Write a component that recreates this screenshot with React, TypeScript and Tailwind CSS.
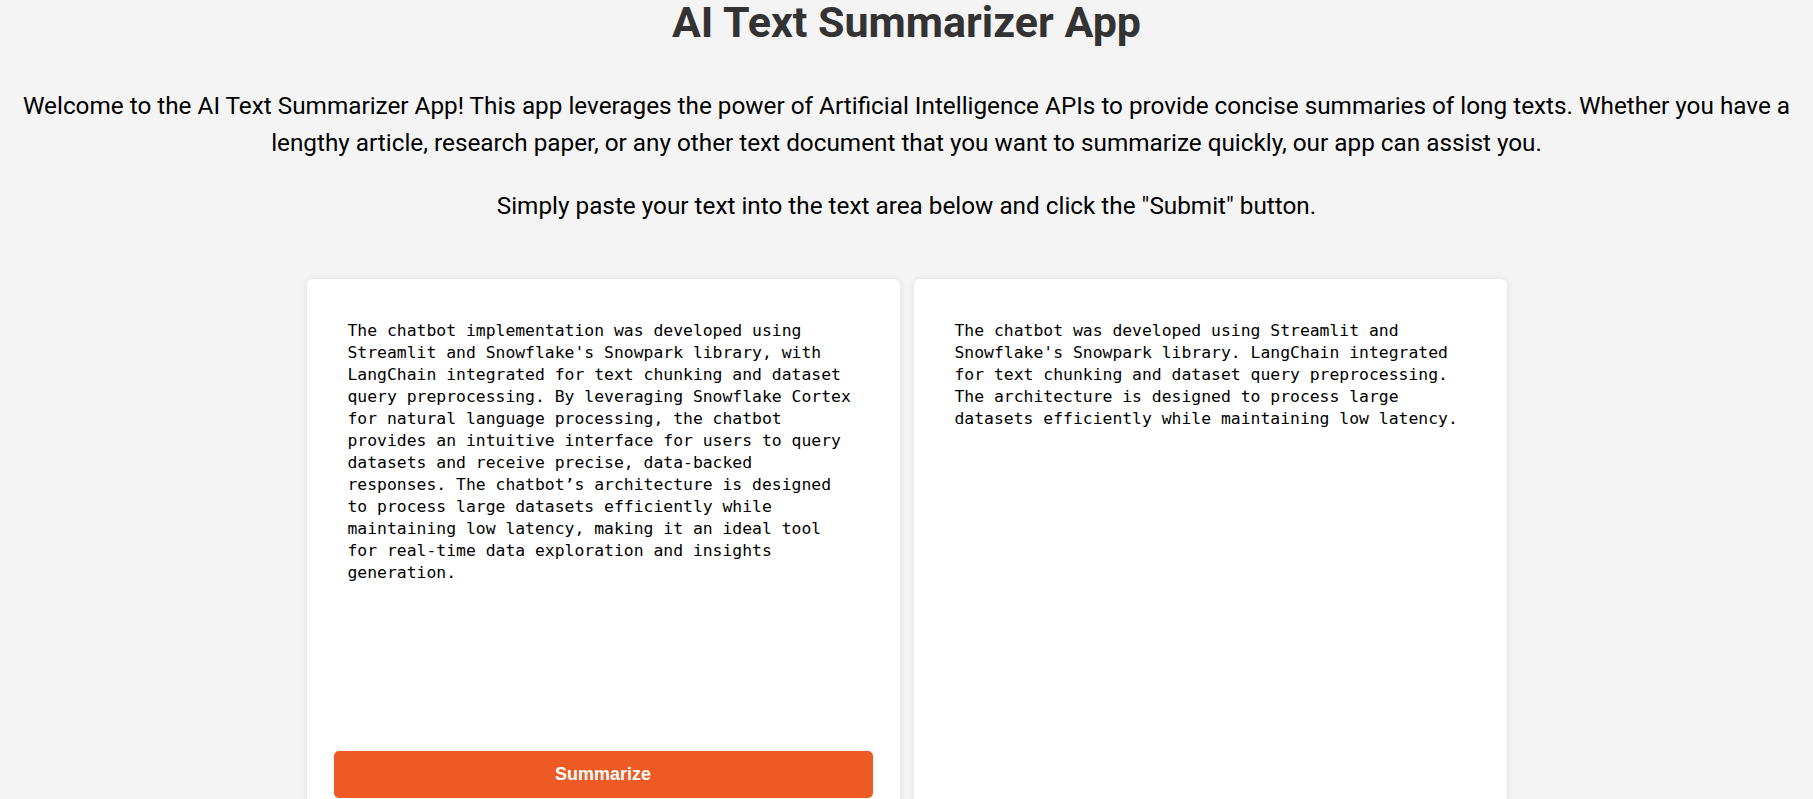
export default function App() {
  const left = [
    "The chatbot implementation was developed using",
    "Streamlit and Snowflake's Snowpark library, with",
    "LangChain integrated for text chunking and dataset",
    "query preprocessing. By leveraging Snowflake Cortex",
    "for natural language processing, the chatbot",
    "provides an intuitive interface for users to query",
    "datasets and receive precise, data-backed",
    "responses. The chatbot’s architecture is designed",
    "to process large datasets efficiently while",
    "maintaining low latency, making it an ideal tool",
    "for real-time data exploration and insights",
    "generation.",
  ];
  const right = [
    "The chatbot was developed using Streamlit and",
    "Snowflake's Snowpark library. LangChain integrated",
    "for text chunking and dataset query preprocessing.",
    "The architecture is designed to process large",
    "datasets efficiently while maintaining low latency.",
  ];
  return (
    <div className="min-h-screen bg-[#f4f4f4] font-['Roboto',sans-serif] text-black">
      <h1 className="m-0 pt-[1px] text-center text-[43px] font-bold leading-[43px] text-[#333]">
        AI Text Summarizer App
      </h1>
      <p className="mt-[43px] px-5 text-center text-[24.3px] leading-[37px]">
        Welcome to the AI Text Summarizer App! This app leverages the power of Artificial Intelligence APIs to provide concise summaries of long texts. Whether you have a
        <br />
        lengthy article, research paper, or any other text document that you want to summarize quickly, our app can assist you.
      </p>
      <p className="mt-[26px] px-5 text-center text-[24.3px] leading-[37px]">
        Simply paste your text into the text area below and click the "Submit" button.
      </p>
      <div className="mx-auto mt-[55px] grid max-w-[1200px] grid-cols-2 gap-[14px]">
        <div className="flex flex-col rounded-md bg-white p-[27px] shadow-[0_0_7px_rgba(0,0,0,0.09)]">
          <div className="h-[418px] px-[14px] pt-[14px] font-['DejaVu_Sans_Mono',monospace] text-[16.4px] leading-[22px] text-black">
            {left.map((l, i) => (
              <div key={i} className="whitespace-pre">{l}</div>
            ))}
          </div>
          <button className="mt-[27px] h-[47px] w-full rounded-[5px] bg-[#ee5a24] font-['Liberation_Sans',Arial,sans-serif] text-[18px] font-bold text-white">
            Summarize
          </button>
        </div>
        <div className="rounded-md bg-white p-[27px] shadow-[0_0_7px_rgba(0,0,0,0.09)]">
          <div className="h-[418px] px-[14px] pt-[14px] font-['DejaVu_Sans_Mono',monospace] text-[16.4px] leading-[22px] text-black">
            {right.map((l, i) => (
              <div key={i} className="whitespace-pre">{l}</div>
            ))}
          </div>
        </div>
      </div>
    </div>
  );
}
